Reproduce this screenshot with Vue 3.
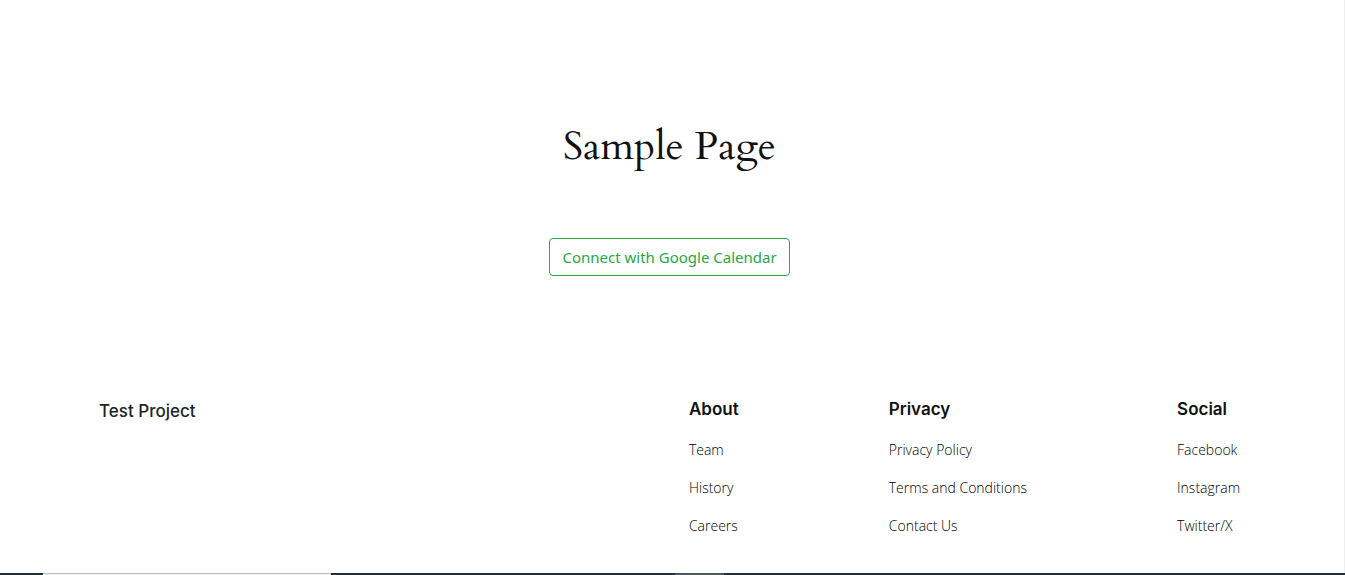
<script setup>
const groups = [
  { title: 'About', links: ['Team', 'History', 'Careers'] },
  { title: 'Privacy', links: ['Privacy Policy', 'Terms and Conditions', 'Contact Us'] },
  { title: 'Social', links: ['Facebook', 'Instagram', 'Twitter/X'] },
]
</script>

<template>
  <div class="page">
    <main class="content">
      <h1>Sample Page</h1>
      <button class="connect" type="button">Connect with Google Calendar</button>
    </main>
    <footer class="footer">
      <p class="brand">Test Project</p>
      <div class="groups">
        <nav v-for="group in groups" :key="group.title" :aria-label="group.title">
          <h2>{{ group.title }}</h2>
          <ul>
            <li v-for="link in group.links" :key="link"><a href="#">{{ link }}</a></li>
          </ul>
        </nav>
      </div>
    </footer>
    <div class="strip" aria-hidden="true">
      <span class="search"></span>
      <span class="active"></span>
    </div>
  </div>
</template>

<style>
body {
  margin: 0;
  background: #fff;
}
</style>

<style scoped>
.page {
  box-sizing: border-box;
  min-height: 100vh;
  display: flex;
  flex-direction: column;
  color: #111;
  font-family: "Segoe UI", "Open Sans", "Noto Sans", sans-serif;
}
.content {
  display: flex;
  flex-direction: column;
  align-items: center;
  padding: 121px 5px 0 0;
  border-right: 1px solid #eee;
}
h1 {
  margin: 0;
  font: 400 40px/52px Cardo, "Liberation Serif", serif;
}
.connect {
  margin: 65px 0 120px;
  padding: 6px 12px;
  border: 1px solid #28a745;
  border-radius: 4px;
  background: transparent;
  color: #28a745;
  font: 400 15px/24px "Segoe UI", "Noto Sans", sans-serif;
  cursor: pointer;
}
.footer {
  flex: 1;
  display: flex;
  justify-content: space-between;
  padding: 0 104px 0 99px;
  border-right: 1px solid #eee;
}
.brand {
  margin: 3px 0 0;
  color: #212529;
  font: 500 17px/24px Inter, sans-serif;
}
.groups {
  width: 48.3%;
  display: flex;
  justify-content: space-between;
}
h2 {
  margin: 0;
  font: 600 17px/26px Inter, sans-serif;
}
ul {
  margin: 16px 0 0;
  padding: 0;
  list-style: none;
  display: grid;
  gap: 14px;
}
li {
  font-size: 14px;
  font-weight: 300;
  line-height: 24px;
}
a {
  color: #000;
  text-decoration: none;
}
.strip {
  display: flex;
  height: 2px;
  background: #22303a;
}
.search {
  box-sizing: border-box;
  width: 21.4%;
  margin-left: 3.2%;
  border-top: 1px solid #bbb;
  background: #f2f2f2;
}
.active {
  width: 3.6%;
  margin-left: 25.6%;
  background: #4b5b5c;
}
</style>
